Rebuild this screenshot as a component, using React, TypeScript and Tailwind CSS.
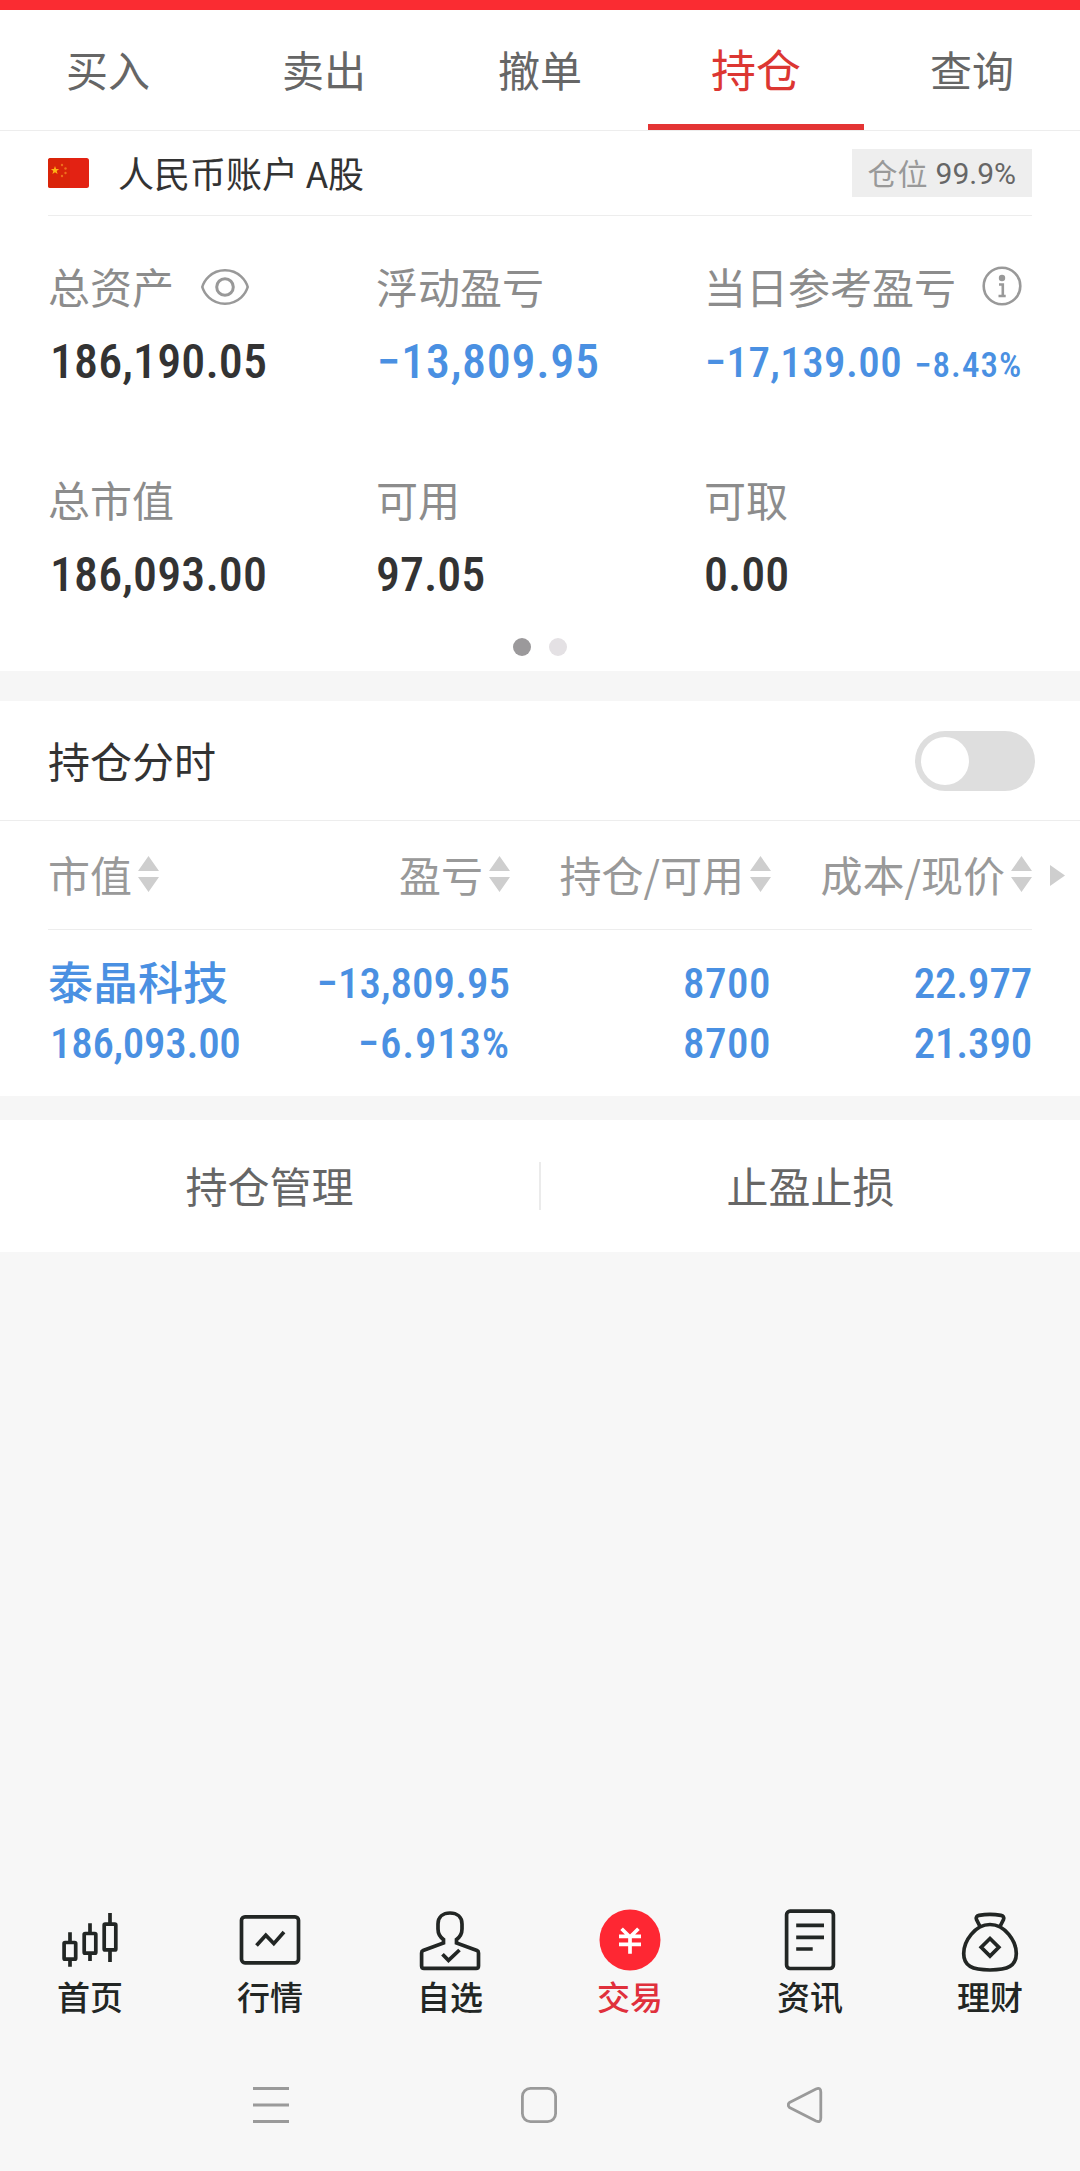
const tabs = ["买入", "卖出", "撤单", "持仓", "查询"];

const columns = ["市值", "盈亏", "持仓/可用", "成本/现价"];

function Num({ children, className }: { children: string; className: string }) {
  return (
    <span className={`whitespace-nowrap font-['Roboto',sans-serif] font-medium font-stretch-75% ${className}`}>
      {children}
    </span>
  );
}

function SortArrows() {
  return (
    <svg className="ml-1.5 h-9 w-[21px] shrink-0" viewBox="0 0 21 36" fill="#cecece">
      <path d="M10.5 0L21 15H0zM10.5 36L0 21h21z" />
    </svg>
  );
}

function Flag() {
  return (
    <svg className="h-[30px] w-[41px]" viewBox="0 0 41 30">
      <rect width="41" height="30" rx="2.5" fill="#e32213" />
      <rect width="22" height="30" rx="2.5" fill="#d92409" />
      <path d="M7 8l1.1 2.9 3 .1-2.4 1.9.9 3L7 14.2l-2.6 1.7.9-3L2.9 11l3-.1z" fill="#fdb414" />
      <g fill="#ee6f1c">
        <circle cx="14" cy="7" r="1.2" />
        <circle cx="17.5" cy="10.5" r="1.2" />
        <circle cx="17.5" cy="15" r="1.2" />
        <circle cx="14" cy="18" r="1.2" />
      </g>
    </svg>
  );
}

function Eye() {
  return (
    <svg className="mt-0.5 ml-[27px] h-9 w-12" viewBox="0 0 48 36" fill="none" stroke="#999" strokeWidth="2.6">
      <path d="M1.3 18C3 12 10 1.3 24 1.3S45 12 46.7 18C45 24 38 34.7 24 34.7S3 24 1.3 18z" />
      <circle cx="24" cy="18" r="8.3" strokeWidth="3" />
    </svg>
  );
}

function Info() {
  return (
    <svg className="ml-[26px] h-10 w-10" viewBox="0 0 40 40" fill="none" stroke="#999" strokeWidth="2.6">
      <circle cx="20" cy="20" r="18.3" />
      <circle cx="20" cy="12" r="3.2" fill="#999" stroke="none" />
      <path d="M17 18.5h3.8v11M16.5 30h7.2" />
    </svg>
  );
}

const navItems = [
  {
    label: "首页",
    icon: (
      <>
        <rect x="6.1" y="33.5" width="11.6" height="16.7" rx="1" />
        <rect x="26.2" y="24.5" width="11.6" height="19.7" rx="1" />
        <rect x="46.2" y="15.2" width="11.6" height="25.7" rx="1" />
        <path d="M12 23.3v10M12 50v7.7M32 14.3v10M32 44v8M52 4v11M52 41v12" />
      </>
    ),
  },
  {
    label: "行情",
    icon: (
      <>
        <rect x="3.5" y="7.8" width="57" height="46" rx="3.5" />
        <path d="M18.5 36.5l9.3-10.2 8 8.3 10.2-11.6" />
      </>
    ),
  },
  {
    label: "自选",
    icon: (
      <>
        <path d="M25.5 34v-3.5C22 28 20 24 20 20v-5C20 8 25 4 32 4s12 4 12 11v5c0 4-2 8-5.5 10.5V34L59 41.5q1.5.6 1.5 2.5v13q0 2.4-2.4 2.4H6q-2.4 0-2.4-2.4V44q0-1.9 1.5-2.5z" />
        <path d="M24.5 45.2l6 6.2L41.5 41" />
      </>
    ),
  },
  {
    label: "交易",
    active: true,
    icon: (
      <>
        <circle cx="32" cy="31" r="30.5" fill="#fe2733" stroke="none" />
        <path d="M23.6 19.7L32 28l8.4-8.3M21 27.3h22M21 35.3h22M32 28v16.7" stroke="#fff" />
      </>
    ),
  },
  {
    label: "资讯",
    icon: (
      <>
        <rect x="8.6" y="2.2" width="46.8" height="57.3" rx="3.5" />
        <path d="M18.2 16.3H46M18.2 28.3H46M18.2 40h16.5" />
      </>
    ),
  },
  {
    label: "理财",
    icon: (
      <>
        <path d="M32 15.5C17 15.5 5.7 32 5.7 44.5 5.7 57 14 61 32 61s26.3-4 26.3-16.5C58.3 32 47 15.5 32 15.5z" />
        <path d="M22 17.5l-3.5-7c-.8-2.3.3-3.7 2.5-4.1 7-1.2 15-1.2 22 0 2.2.4 3.3 1.8 2.5 4.1l-3.5 7" />
        <path d="M32 29.5l8.8 8.8-8.8 8.8-8.8-8.8z" />
      </>
    ),
  },
];

export default function App() {
  return (
    <div className="flex h-[2171px] w-[1080px] flex-col bg-[#f7f7f7] font-['Noto_Sans_CJK_SC',sans-serif] text-[42px] leading-[60px] text-[#333]">
      <div className="h-2.5 bg-[#fa2c32]" />

      {/* Trade tabs */}
      <nav className="flex h-[121px] border-b border-[#ededed] bg-white">
        {tabs.map((tab) =>
          tab === "持仓" ? (
            <div key={tab} className="flex flex-1 items-center justify-center border-b-[6px] border-[#e43434] pt-1 text-[45px] text-[#dc3632]">
              {tab}
            </div>
          ) : (
            <div key={tab} className="flex flex-1 items-center justify-center pb-0.5 text-[#666]">
              {tab}
            </div>
          ),
        )}
      </nav>

      {/* Account */}
      <div className="bg-white px-12">
        <div className="flex h-[85px] items-center border-b border-[#ededed]">
          <Flag />
          <span className="-mt-0.5 ml-[29px] text-[36px]">人民币账户 A股</span>
          <div className="ml-auto flex h-12 items-center bg-[#eee] px-4 text-[30px]">
            <span className="-mt-0.5 text-[#999]">仓位</span>
            <span className="mt-px ml-2 font-['Roboto',sans-serif] text-[#666]">99.9%</span>
          </div>
        </div>
      </div>

      {/* Balances */}
      <section className="h-[455px] bg-white px-12 pt-10">
        <div className="grid h-[382px] grid-cols-3 grid-rows-[213px_169px] text-[#8c8c8c]">
          <div>
            <div className="flex items-center">总资产<Eye /></div>
            <Num className="mt-4 ml-0.5 block text-[48px] tracking-[0.1px] text-[#333]">186,190.05</Num>
          </div>
          <div>
            <div>浮动盈亏</div>
            <Num className="mt-4 ml-px block text-[48px] tracking-[0.7px] text-[#4a90e2]">−13,809.95</Num>
          </div>
          <div>
            <div className="flex items-center">当日参考盈亏<Info /></div>
            <div className="mt-4 ml-px flex items-baseline text-[#4a90e2]">
              <Num className="text-[43px] tracking-[0.4px]">−17,139.00</Num>
              <Num className="ml-3 text-[35px] tracking-[1.1px]">−8.43%</Num>
            </div>
          </div>
          <div>
            <div>总市值</div>
            <Num className="mt-4 ml-0.5 block text-[48px] tracking-[0.1px] text-[#333]">186,093.00</Num>
          </div>
          <div>
            <div>可用</div>
            <Num className="mt-4 block text-[48px] text-[#333]">97.05</Num>
          </div>
          <div>
            <div>可取</div>
            <Num className="mt-4 block text-[48px] text-[#333]">0.00</Num>
          </div>
        </div>
        <div className="flex justify-center gap-[18px]">
          <span className="size-[18px] rounded-full bg-[#9b999b]" />
          <span className="size-[18px] rounded-full bg-[#e4e1e4]" />
        </div>
      </section>

      <div className="h-[30px] bg-[#f6f6f6]" />

      {/* Holdings */}
      <section className="h-[395px] bg-white">
        <div className="flex h-[120px] items-center justify-between border-b border-[#ededed] pr-[45px] pl-12">
          <span className="-mt-0.5">持仓分时</span>
          <span className="flex h-[60px] w-[120px] items-center rounded-full bg-[#dedede] px-1.5">
            <span className="size-12 rounded-full bg-white" />
          </span>
        </div>
        <div className="flex items-center">
          <div className="ml-12 grid h-[109px] w-[984px] grid-cols-[201px_261px_261px_261px] items-center border-b border-[#ededed] text-[#999]">
            {columns.map((c, i) => (
              <div key={c} className={`-mt-0.5 flex items-center ${i === 0 ? "" : "justify-end"}`}>
                {c}
                <SortArrows />
              </div>
            ))}
          </div>
          <svg className="ml-[18px] h-[21px] w-[15px]" viewBox="0 0 15 21" fill="#cecece">
            <path d="M0 0l15 10.5L0 21z" />
          </svg>
        </div>
        <div className="mx-12 mt-[23px] grid grid-cols-[201px_261px_261px_261px] text-right text-[#4a90e2]">
          <div className="-mt-0.5 text-left text-[45px] font-medium">泰晶科技</div>
          <Num className="text-[43px]">−13,809.95</Num>
          <Num className="text-[43px] tracking-[0.5px]">8700</Num>
          <Num className="text-[43px] tracking-[-0.2px]">22.977</Num>
          <Num className="ml-0.5 text-left text-[43px] tracking-[-0.3px]">186,093.00</Num>
          <Num className="text-[43px] tracking-[0.8px]">−6.913%</Num>
          <Num className="text-[43px] tracking-[0.5px]">8700</Num>
          <Num className="text-[43px] tracking-[-0.2px]">21.390</Num>
        </div>
      </section>

      <div className="h-6 bg-[#f6f6f6]" />

      <div className="flex h-[132px] items-center bg-white text-[#666]">
        <div className="-mt-0.5 flex-1 text-center">持仓管理</div>
        <div className="h-12 w-0.5 bg-[#ebebeb]" />
        <div className="-mt-0.5 flex-1 text-center">止盈止损</div>
      </div>

      {/* Bottom bar */}
      <nav className="mt-auto grid h-[126px] grid-cols-6 text-[33px] leading-[46px] font-medium">
        {navItems.map((item) => (
          <div key={item.label} className={`flex flex-col items-center ${item.active ? "text-[#e0303c]" : "text-[#222624]"}`}>
            <svg className="size-16" viewBox="0 0 64 64" fill="none" stroke="currentColor" strokeWidth="3.7">
              {item.icon}
            </svg>
            {item.label}
          </div>
        ))}
      </nav>

      {/* System keys */}
      <div className="flex h-[136px] items-center pt-1 pl-[253px]">
        <svg className="h-9 w-9" viewBox="0 0 36 36" stroke="#9a9a9a" strokeWidth="3">
          <path d="M0 1.5h36M0 18h36M0 34.5h36" />
        </svg>
        <svg className="ml-[232px] h-9 w-9" viewBox="0 0 36 36" fill="none" stroke="#9a9a9a" strokeWidth="2.8">
          <rect x="1.4" y="1.4" width="33.2" height="33.2" rx="8" />
        </svg>
        <svg className="ml-[230px] h-9 w-9" viewBox="0 0 36 36" fill="none" stroke="#9a9a9a" strokeWidth="2.8" strokeLinejoin="round">
          <path d="M2.5 15.5L29 2q4.8-2 4.8 3v26q0 5-4.8 3L2.5 20.5q-2.5-2.5 0-5z" />
        </svg>
      </div>
    </div>
  );
}
